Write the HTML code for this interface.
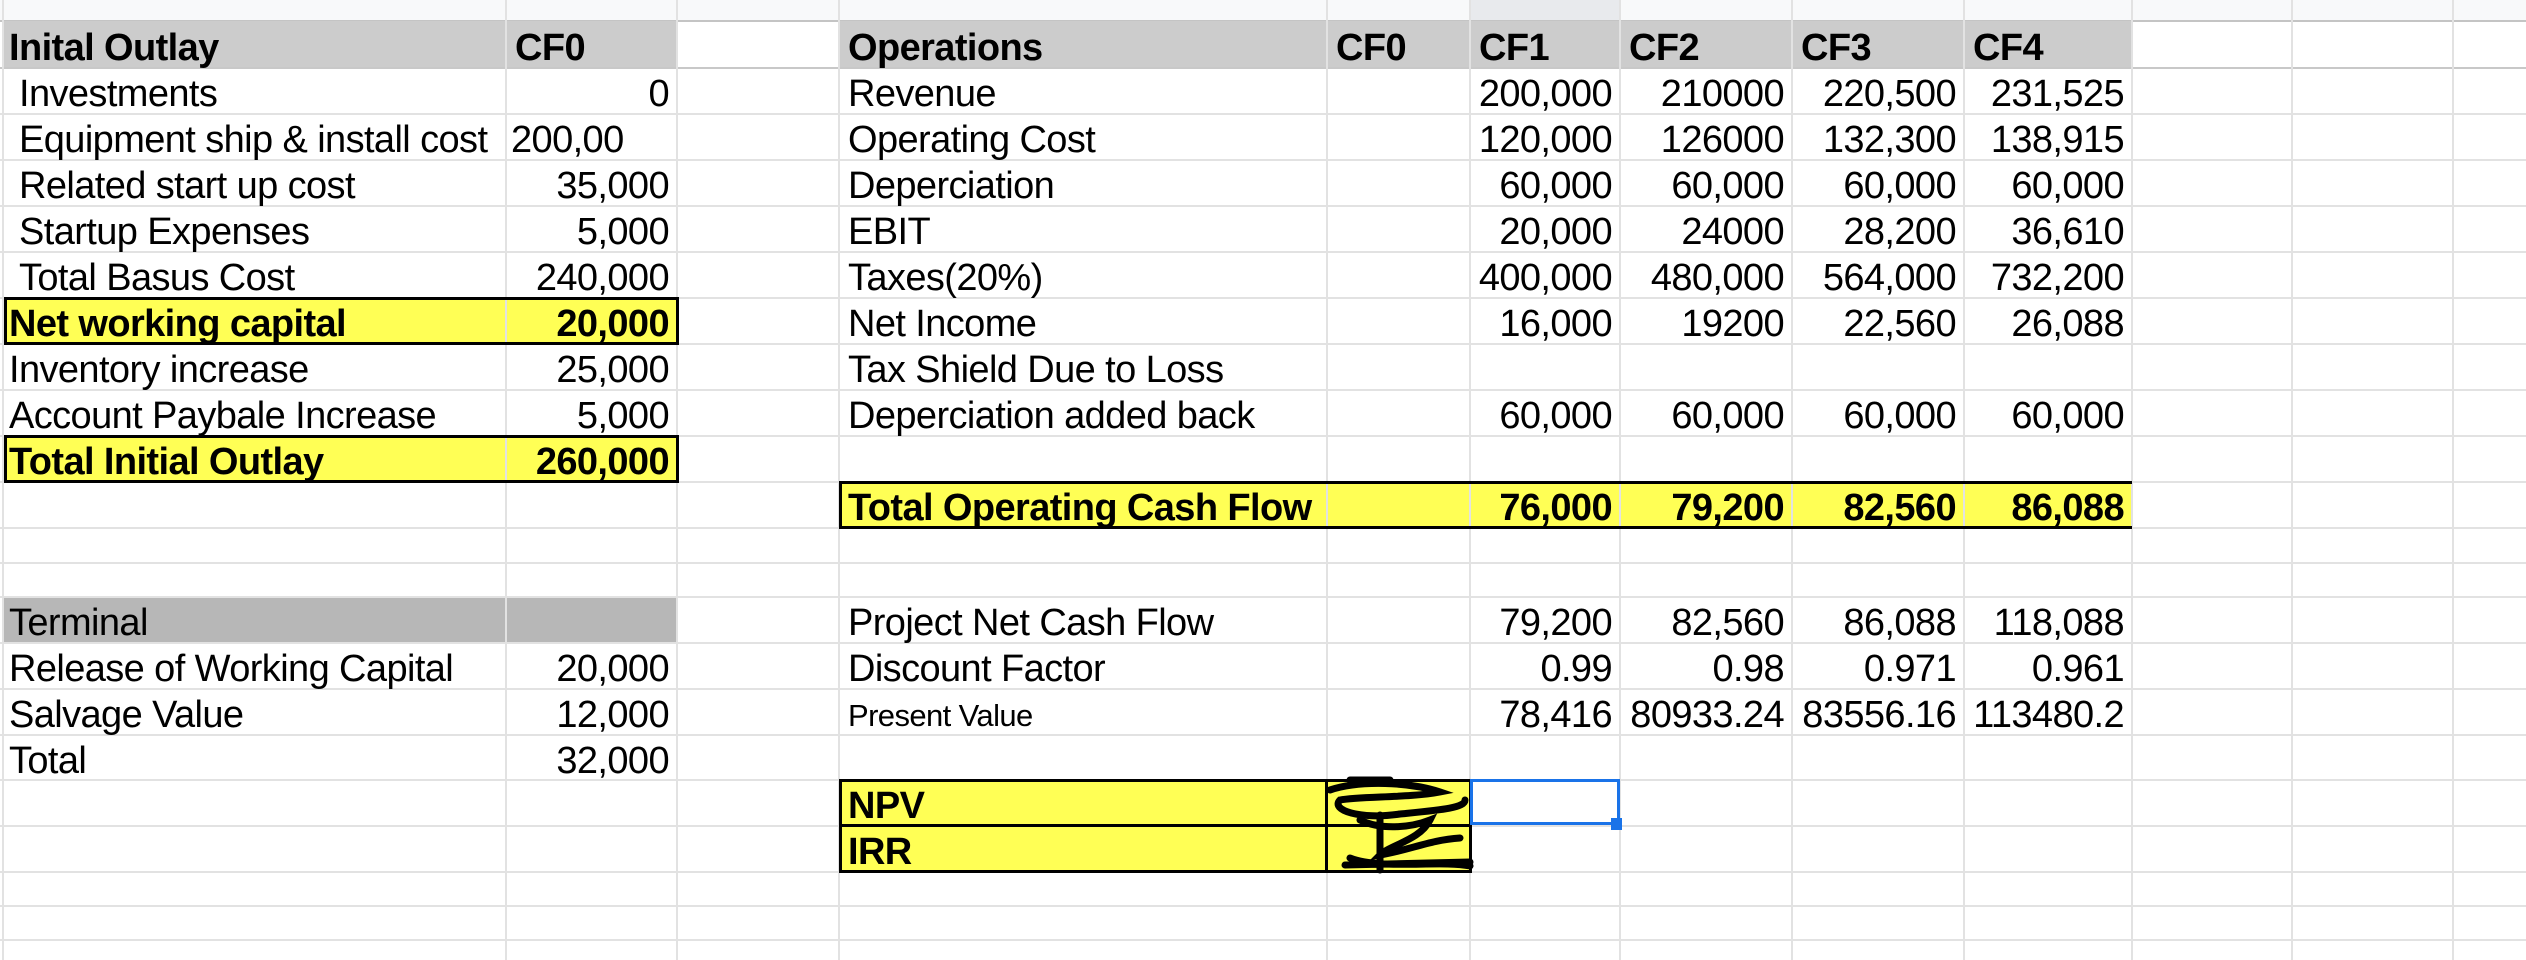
<!DOCTYPE html>
<html><head><meta charset="utf-8">
<style>
html,body{margin:0;padding:0;width:2526px;height:960px;overflow:hidden;background:#fff;position:relative;font-family:"Liberation Sans",Arial,sans-serif;color:#000}
.hl{position:absolute;left:0;width:2526px;height:2px;background:#e2e2e2}
.vl{position:absolute;top:0;height:960px;width:2px;background:#e2e2e2}
.bg{position:absolute}
.c{position:absolute;display:flex;align-items:flex-end;box-sizing:border-box;padding:0 8px 0 7px;font-size:38px;line-height:39px;letter-spacing:-0.6px;white-space:nowrap;height:46px}
.r{justify-content:flex-end;padding-right:8px}
.b{font-weight:bold}
.blk{position:absolute;background:#000}
</style></head><body>
<div class="bg" style="left:0;top:0;width:2526px;height:21px;background:#f8f9fa"></div>
<div class="bg" style="left:1470px;top:0;width:150px;height:21px;background:#e8eaed"></div>
<div class="bg" style="left:0;top:20px;width:2526px;height:2px;background:#c4c4c4"></div>

<div class="bg" style="left:4px;top:21px;width:673px;height:47px;background:#cccccc"></div>
<div class="bg" style="left:839px;top:21px;width:1293px;height:47px;background:#cccccc"></div>
<div class="bg" style="left:4px;top:597px;width:673px;height:46px;background:#b7b7b7"></div>
<div class="bg" style="left:4px;top:298px;width:673px;height:46px;background:#ffff55"></div>
<div class="bg" style="left:4px;top:436px;width:673px;height:46px;background:#ffff55"></div>
<div class="bg" style="left:839px;top:482px;width:1293px;height:46px;background:#ffff55"></div>
<div class="bg" style="left:839px;top:780px;width:631px;height:92px;background:#ffff55"></div>

<div class="hl" style="top:67px;background:#c8c8c8"></div>
<div class="hl" style="top:113px"></div><div class="hl" style="top:159px"></div><div class="hl" style="top:205px"></div>
<div class="hl" style="top:251px"></div><div class="hl" style="top:297px"></div><div class="hl" style="top:343px"></div>
<div class="hl" style="top:389px"></div><div class="hl" style="top:435px"></div><div class="hl" style="top:481px"></div>
<div class="hl" style="top:527px"></div><div class="hl" style="top:562px"></div><div class="hl" style="top:596px"></div>
<div class="hl" style="top:642px"></div><div class="hl" style="top:688px"></div><div class="hl" style="top:734px"></div>
<div class="hl" style="top:779px"></div><div class="hl" style="top:825px"></div><div class="hl" style="top:871px"></div>
<div class="hl" style="top:905px"></div><div class="hl" style="top:939px"></div>
<div class="vl" style="left:2px"></div><div class="vl" style="left:505px"></div><div class="vl" style="left:676px"></div>
<div class="vl" style="left:838px"></div><div class="vl" style="left:1326px"></div><div class="vl" style="left:1469px"></div>
<div class="vl" style="left:1619px"></div><div class="vl" style="left:1791px"></div><div class="vl" style="left:1963px"></div>
<div class="vl" style="left:2131px"></div><div class="vl" style="left:2291px"></div><div class="vl" style="left:2452px"></div>

<div class="blk" style="left:4px;top:297px;width:675px;height:3px"></div>
<div class="blk" style="left:4px;top:342px;width:675px;height:3px"></div>
<div class="blk" style="left:4px;top:297px;width:3px;height:48px"></div>
<div class="blk" style="left:676px;top:297px;width:3px;height:48px"></div>
<div class="blk" style="left:4px;top:435px;width:675px;height:3px"></div>
<div class="blk" style="left:4px;top:480px;width:675px;height:3px"></div>
<div class="blk" style="left:4px;top:435px;width:3px;height:48px"></div>
<div class="blk" style="left:676px;top:435px;width:3px;height:48px"></div>
<div class="blk" style="left:839px;top:481px;width:1293px;height:3px"></div>
<div class="blk" style="left:839px;top:526px;width:1293px;height:3px"></div>
<div class="blk" style="left:839px;top:481px;width:3px;height:48px"></div>
<div class="blk" style="left:839px;top:779px;width:633px;height:3px"></div>
<div class="blk" style="left:839px;top:824px;width:633px;height:3px"></div>
<div class="blk" style="left:839px;top:870px;width:633px;height:3px"></div>
<div class="blk" style="left:839px;top:779px;width:3px;height:94px"></div>
<div class="blk" style="left:1325px;top:779px;width:3px;height:94px"></div>
<div class="blk" style="left:1469px;top:779px;width:3px;height:94px"></div>

<div class="bg" style="left:1470px;top:779px;width:150px;height:46px;border:3px solid #1a73e8;box-sizing:border-box"></div>
<div class="bg" style="left:1611px;top:818px;width:11px;height:12px;background:#1a73e8"></div>

<div class="c b" style="left:2px;top:22px">Inital Outlay</div>
<div class="c b" style="left:508px;top:22px">CF0</div>
<div class="c" style="left:12px;top:68px">Investments</div><div class="c r" style="left:506px;top:68px;width:171px">0</div>
<div class="c" style="left:12px;top:114px">Equipment ship &amp; install cost</div><div class="c" style="left:504px;top:114px">200,00</div>
<div class="c" style="left:12px;top:160px">Related start up cost</div><div class="c r" style="left:506px;top:160px;width:171px">35,000</div>
<div class="c" style="left:12px;top:206px">Startup Expenses</div><div class="c r" style="left:506px;top:206px;width:171px">5,000</div>
<div class="c" style="left:12px;top:252px">Total Basus Cost</div><div class="c r" style="left:506px;top:252px;width:171px">240,000</div>
<div class="c b" style="left:2px;top:298px">Net working capital</div><div class="c r b" style="left:506px;top:298px;width:171px">20,000</div>
<div class="c" style="left:2px;top:344px">Inventory increase</div><div class="c r" style="left:506px;top:344px;width:171px">25,000</div>
<div class="c" style="left:2px;top:390px">Account Paybale Increase</div><div class="c r" style="left:506px;top:390px;width:171px">5,000</div>
<div class="c b" style="left:2px;top:436px">Total Initial Outlay</div><div class="c r b" style="left:506px;top:436px;width:171px">260,000</div>
<div class="c" style="left:2px;top:597px">Terminal</div>
<div class="c" style="left:2px;top:643px">Release of Working Capital</div><div class="c r" style="left:506px;top:643px;width:171px">20,000</div>
<div class="c" style="left:2px;top:689px">Salvage Value</div><div class="c r" style="left:506px;top:689px;width:171px">12,000</div>
<div class="c" style="left:2px;top:735px">Total</div><div class="c r" style="left:506px;top:735px;width:171px">32,000</div>

<div class="c b" style="left:841px;top:22px">Operations</div>
<div class="c b" style="left:1329px;top:22px">CF0</div>
<div class="c b" style="left:1472px;top:22px">CF1</div>
<div class="c b" style="left:1622px;top:22px">CF2</div>
<div class="c b" style="left:1794px;top:22px">CF3</div>
<div class="c b" style="left:1966px;top:22px">CF4</div>

<div class="c" style="left:841px;top:68px">Revenue</div>
<div class="c r" style="left:1470px;top:68px;width:150px">200,000</div><div class="c r" style="left:1620px;top:68px;width:172px">210000</div><div class="c r" style="left:1792px;top:68px;width:172px">220,500</div><div class="c r" style="left:1964px;top:68px;width:168px">231,525</div>
<div class="c" style="left:841px;top:114px">Operating Cost</div>
<div class="c r" style="left:1470px;top:114px;width:150px">120,000</div><div class="c r" style="left:1620px;top:114px;width:172px">126000</div><div class="c r" style="left:1792px;top:114px;width:172px">132,300</div><div class="c r" style="left:1964px;top:114px;width:168px">138,915</div>
<div class="c" style="left:841px;top:160px">Deperciation</div>
<div class="c r" style="left:1470px;top:160px;width:150px">60,000</div><div class="c r" style="left:1620px;top:160px;width:172px">60,000</div><div class="c r" style="left:1792px;top:160px;width:172px">60,000</div><div class="c r" style="left:1964px;top:160px;width:168px">60,000</div>
<div class="c" style="left:841px;top:206px">EBIT</div>
<div class="c r" style="left:1470px;top:206px;width:150px">20,000</div><div class="c r" style="left:1620px;top:206px;width:172px">24000</div><div class="c r" style="left:1792px;top:206px;width:172px">28,200</div><div class="c r" style="left:1964px;top:206px;width:168px">36,610</div>
<div class="c" style="left:841px;top:252px">Taxes(20%)</div>
<div class="c r" style="left:1470px;top:252px;width:150px">400,000</div><div class="c r" style="left:1620px;top:252px;width:172px">480,000</div><div class="c r" style="left:1792px;top:252px;width:172px">564,000</div><div class="c r" style="left:1964px;top:252px;width:168px">732,200</div>
<div class="c" style="left:841px;top:298px">Net Income</div>
<div class="c r" style="left:1470px;top:298px;width:150px">16,000</div><div class="c r" style="left:1620px;top:298px;width:172px">19200</div><div class="c r" style="left:1792px;top:298px;width:172px">22,560</div><div class="c r" style="left:1964px;top:298px;width:168px">26,088</div>
<div class="c" style="left:841px;top:344px">Tax Shield Due to Loss</div>
<div class="c" style="left:841px;top:390px">Deperciation added back</div>
<div class="c r" style="left:1470px;top:390px;width:150px">60,000</div><div class="c r" style="left:1620px;top:390px;width:172px">60,000</div><div class="c r" style="left:1792px;top:390px;width:172px">60,000</div><div class="c r" style="left:1964px;top:390px;width:168px">60,000</div>
<div class="c b" style="left:841px;top:482px">Total Operating Cash Flow</div>
<div class="c r b" style="left:1470px;top:482px;width:150px">76,000</div><div class="c r b" style="left:1620px;top:482px;width:172px">79,200</div><div class="c r b" style="left:1792px;top:482px;width:172px">82,560</div><div class="c r b" style="left:1964px;top:482px;width:168px">86,088</div>
<div class="c" style="left:841px;top:597px">Project Net Cash Flow</div>
<div class="c r" style="left:1470px;top:597px;width:150px">79,200</div><div class="c r" style="left:1620px;top:597px;width:172px">82,560</div><div class="c r" style="left:1792px;top:597px;width:172px">86,088</div><div class="c r" style="left:1964px;top:597px;width:168px">118,088</div>
<div class="c" style="left:841px;top:643px">Discount Factor</div>
<div class="c r" style="left:1470px;top:643px;width:150px">0.99</div><div class="c r" style="left:1620px;top:643px;width:172px">0.98</div><div class="c r" style="left:1792px;top:643px;width:172px">0.971</div><div class="c r" style="left:1964px;top:643px;width:168px">0.961</div>
<div class="c" style="left:841px;top:689px;font-size:31px">Present Value</div>
<div class="c r" style="left:1470px;top:689px;width:150px">78,416</div><div class="c r" style="left:1620px;top:689px;width:172px">80933.24</div><div class="c r" style="left:1792px;top:689px;width:172px">83556.16</div><div class="c r" style="left:1964px;top:689px;width:168px">113480.2</div>
<div class="c b" style="left:841px;top:780px">NPV</div>
<div class="c b" style="left:841px;top:826px">IRR</div>

<svg style="position:absolute;left:1320px;top:770px" width="160" height="110" viewBox="0 0 160 110">
<g fill="none" stroke="#000" stroke-width="7" stroke-linecap="round">
<path d="M30 10 L70 10"/>
<path d="M10 20 C40 10 90 12 120 22 C90 28 40 26 20 30 C10 40 40 50 80 44 C120 40 145 38 145 30"/>
<path d="M40 50 C60 60 90 58 110 50 C100 70 70 75 60 85 C90 80 110 70 140 68"/>
<path d="M25 95 L150 92 M30 88 C60 100 120 90 150 96 M60 45 L60 100"/>
</g></svg>
</body></html>
